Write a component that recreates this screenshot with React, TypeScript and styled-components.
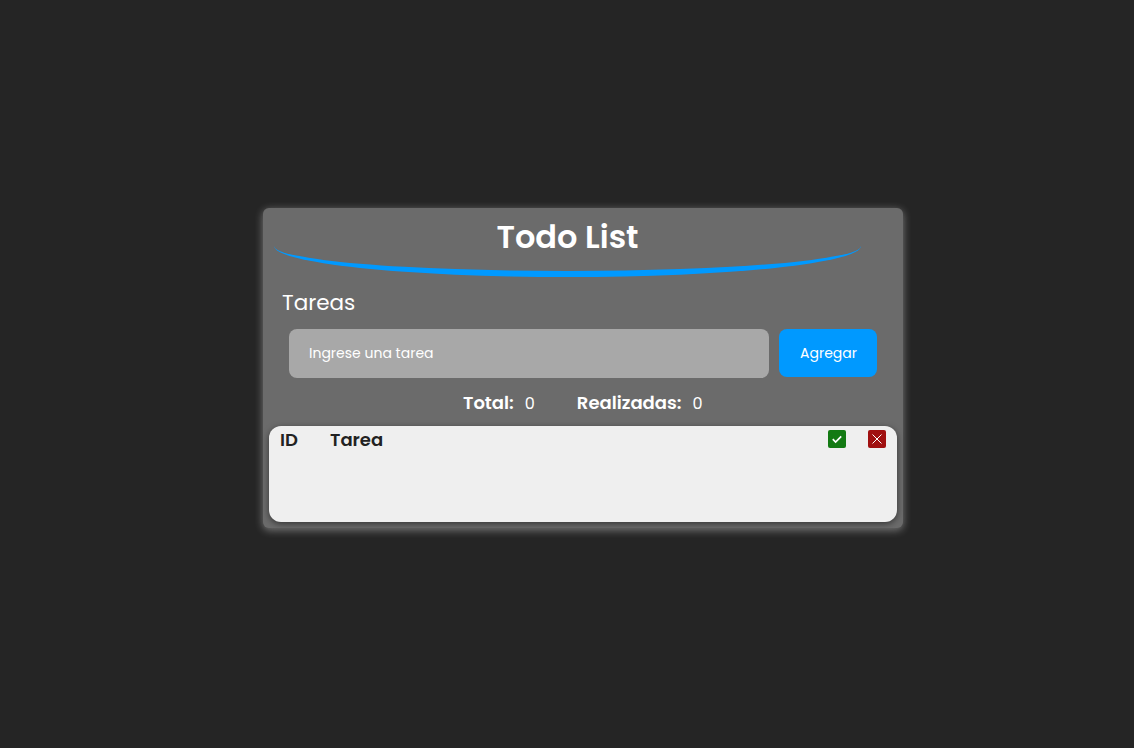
import styled, { createGlobalStyle } from 'styled-components';

const GlobalStyle = createGlobalStyle`
  html, body {
    margin: 0;
    background: #252525;
  }
  body {
    font-family: Poppins, Inter, "Liberation Sans", sans-serif;
  }
`;

const Page = styled.div`
  min-height: 748px;
  padding: 208px 0 0 263px;
  box-sizing: border-box;
`;

const Panel = styled.main`
  width: 640px;
  height: 320px;
  box-sizing: border-box;
  padding: 7px 6px 6px;
  background: #6b6b6b;
  border-radius: 6px;
  box-shadow: 0 2px 9px rgba(255, 255, 255, 0.4);
  color: #fff;
`;

const Header = styled.header`
  width: 587px;
  height: 62px;
  box-sizing: border-box;
  margin-left: 5px;
  border-bottom: 6px solid #0099ff;
  border-radius: 50%;
  text-align: center;
`;

const Title = styled.h1`
  margin: 0;
  padding-top: 1px;
  font-size: 32px;
  line-height: 42px;
  font-weight: 600;
`;

const Subtitle = styled.h2`
  margin: 13px 0 0 13px;
  font-size: 21.5px;
  line-height: 26px;
  font-weight: 400;
`;

const Form = styled.form`
  display: flex;
  gap: 10px;
  margin: 13px 0 0 20px;
`;

const TaskInput = styled.input`
  width: 480px;
  height: 49px;
  box-sizing: border-box;
  padding: 0 20px;
  border: none;
  border-radius: 8px;
  background: #a8a8a8;
  color: #fff;
  font: 400 14px Poppins, Inter, "Liberation Sans", sans-serif;

  &::placeholder {
    color: #fff;
    opacity: 1;
  }
`;

const AddButton = styled.button`
  width: 98px;
  height: 48px;
  padding: 0 0 0 1px;
  border: none;
  border-radius: 8px;
  background: #0099ff;
  color: #fff;
  font: 400 14px Poppins, Inter, "Liberation Sans", sans-serif;
`;

const Stats = styled.div`
  display: flex;
  gap: 42px;
  margin: 13px 0 0 194px;
  line-height: 24px;
`;

const Stat = styled.div`
  display: flex;
  gap: 11px;
  align-items: baseline;
`;

const StatLabel = styled.span`
  font-size: 18px;
  font-weight: 600;
`;

const StatValue = styled.span`
  font-size: 16px;
`;

const TaskTable = styled.section`
  width: 628px;
  height: 96px;
  box-sizing: border-box;
  margin-top: 10px;
  padding: 4px 11px 0;
  background: #efefef;
  border-radius: 12px;
  box-shadow: 0 2px 6px rgba(0, 0, 0, 0.5);
  color: #222;
`;

const HeadRow = styled.div`
  display: flex;
  align-items: flex-start;
  height: 19px;
  line-height: 19px;
`;

const HeadCell = styled.span<{ $width?: number }>`
  width: ${(props) => (props.$width ? `${props.$width}px` : 'auto')};
  flex: ${(props) => (props.$width ? 'none' : 1)};
  font-size: 18px;
  font-weight: 600;
`;

const IconBox = styled.span<{ $color: string; $gap: number }>`
  display: flex;
  align-items: center;
  justify-content: center;
  width: 18px;
  height: 18px;
  margin-left: ${(props) => props.$gap}px;
  border-radius: 2px;
  background: ${(props) => props.$color};
`;

const App = () => {
  return (
    <Page>
      <GlobalStyle />
      <Panel>
        <Header>
          <Title>Todo List</Title>
        </Header>
        <Subtitle>Tareas</Subtitle>
        <Form>
          <TaskInput placeholder="Ingrese una tarea" />
          <AddButton type="button">Agregar</AddButton>
        </Form>
        <Stats>
          <Stat>
            <StatLabel>Total:</StatLabel>
            <StatValue>0</StatValue>
          </Stat>
          <Stat>
            <StatLabel>Realizadas:</StatLabel>
            <StatValue>0</StatValue>
          </Stat>
        </Stats>
        <TaskTable>
          <HeadRow>
            <HeadCell $width={50}>ID</HeadCell>
            <HeadCell>Tarea</HeadCell>
            <IconBox $color="#137a13" $gap={0}>
              <svg width="12" height="12" viewBox="0 0 12 12" fill="none" stroke="#fff" strokeWidth="1.7">
                <path d="M1.8 6.2 L4.6 9 L10.2 3.4" />
              </svg>
            </IconBox>
            <IconBox $color="#a01010" $gap={22}>
              <svg width="12" height="12" viewBox="0 0 12 12" fill="none" stroke="#fff" strokeWidth="1">
                <path d="M1.5 1.5 L10.5 10.5 M10.5 1.5 L1.5 10.5" />
              </svg>
            </IconBox>
          </HeadRow>
        </TaskTable>
      </Panel>
    </Page>
  );
};

export default App;
